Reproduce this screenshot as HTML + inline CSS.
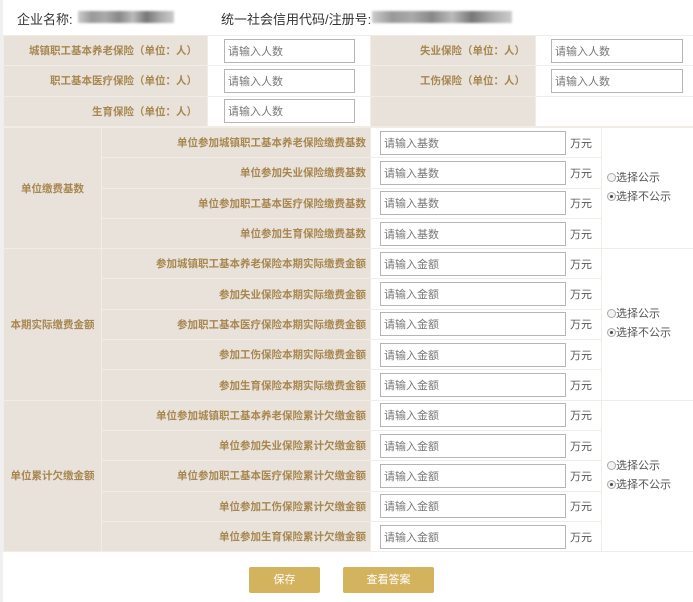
<!DOCTYPE html>
<html><head><meta charset="utf-8"><style>
*{margin:0;padding:0;box-sizing:border-box}
body{width:693px;height:602px;background:#fff;font-family:"Liberation Sans","Noto Sans CJK SC",sans-serif;position:relative;overflow:hidden}
.strip{position:absolute;left:0;top:0;width:3px;height:602px;background:#f0f0f0}
.hdr{position:absolute;top:9px;font-size:13px;color:#333}
.blur{position:absolute;top:11px;height:12px;background:linear-gradient(90deg,#ccc,#999,#aaa,#888,#bbb,#777,#aaa,#ccc);filter:blur(1px)}
table{position:absolute;border-collapse:collapse;table-layout:fixed}
td{border:1px solid #f1ece6;font-size:11px;height:30.3px;padding:0}
.l{background:#e8e2da;color:#a7864f;font-weight:bold;text-align:right;padding-right:10px;font-size:10.5px}
.t2 .l{padding-right:4px}
.c{text-align:center!important;padding:0!important}
.in{display:inline-flex;align-items:center;border:1px solid #b5b5b5;height:24px;font-size:11px;color:#777;padding-left:3px;vertical-align:middle;background:#fff}
.u{font-size:11px;color:#555;margin-left:4px;vertical-align:middle}
.r{font-size:11px;color:#555;line-height:19px;padding-left:5px}
.rb{display:inline-block;width:9px;height:9px;border:1px solid #aaa;border-radius:50%;vertical-align:-1px;position:relative;background:#f3f3f3}
.rb.on::after{content:"";position:absolute;left:2px;top:2px;width:3px;height:3px;border-radius:50%;background:#444}
.btn{position:absolute;top:567px;height:26px;background:#d4b35f;color:#fff;font-size:11px;text-align:center;line-height:26px;border-radius:2px}
</style></head><body>
<div class="strip"></div>
<div class="hdr" style="left:17px">企业名称:</div>
<div class="blur" style="left:78px;width:96px"></div>
<div class="hdr" style="left:221px">统一社会信用代码/注册号:</div>
<div class="blur" style="left:372px;width:140px"></div>

<table style="left:3px;top:35px;width:690px">
<colgroup><col style="width:204px"><col style="width:163px"><col style="width:165px"><col style="width:158px"></colgroup>
<tr><td class="l">城镇职工基本养老保险（单位：人）</td><td style="padding-left:16px"><span class="in" style="width:131px">请输入人数</span></td><td class="l">失业保险（单位：人）</td><td style="padding-left:15px"><span class="in" style="width:132px">请输入人数</span></td></tr>
<tr><td class="l">职工基本医疗保险（单位：人）</td><td style="padding-left:16px"><span class="in" style="width:131px">请输入人数</span></td><td class="l">工伤保险（单位：人）</td><td style="padding-left:15px"><span class="in" style="width:132px">请输入人数</span></td></tr>
<tr><td class="l">生育保险（单位：人）</td><td style="padding-left:16px"><span class="in" style="width:131px">请输入人数</span></td><td class="l"></td><td></td></tr>
</table>

<table class="t2" style="left:3px;top:127px;width:690px">
<colgroup><col style="width:98px"><col style="width:269px"><col style="width:231px"><col style="width:92px"></colgroup>
<tr><td class="l c" rowspan="4">单位缴费基数</td><td class="l">单位参加城镇职工基本养老保险缴费基数</td><td style="padding-left:9px"><span class="in" style="width:186px">请输入基数</span><span class="u">万元</span></td><td rowspan="4" class="r"><span class="rb"></span>选择公示<br><span class="rb on"></span>选择不公示</td></tr>
<tr><td class="l">单位参加失业保险缴费基数</td><td style="padding-left:9px"><span class="in" style="width:186px">请输入基数</span><span class="u">万元</span></td></tr>
<tr><td class="l">单位参加职工基本医疗保险缴费基数</td><td style="padding-left:9px"><span class="in" style="width:186px">请输入基数</span><span class="u">万元</span></td></tr>
<tr><td class="l">单位参加生育保险缴费基数</td><td style="padding-left:9px"><span class="in" style="width:186px">请输入基数</span><span class="u">万元</span></td></tr>
<tr><td class="l c" rowspan="5">本期实际缴费金额</td><td class="l">参加城镇职工基本养老保险本期实际缴费金额</td><td style="padding-left:9px"><span class="in" style="width:186px">请输入金额</span><span class="u">万元</span></td><td rowspan="5" class="r"><span class="rb"></span>选择公示<br><span class="rb on"></span>选择不公示</td></tr>
<tr><td class="l">参加失业保险本期实际缴费金额</td><td style="padding-left:9px"><span class="in" style="width:186px">请输入金额</span><span class="u">万元</span></td></tr>
<tr><td class="l">参加职工基本医疗保险本期实际缴费金额</td><td style="padding-left:9px"><span class="in" style="width:186px">请输入金额</span><span class="u">万元</span></td></tr>
<tr><td class="l">参加工伤保险本期实际缴费金额</td><td style="padding-left:9px"><span class="in" style="width:186px">请输入金额</span><span class="u">万元</span></td></tr>
<tr><td class="l">参加生育保险本期实际缴费金额</td><td style="padding-left:9px"><span class="in" style="width:186px">请输入金额</span><span class="u">万元</span></td></tr>
<tr><td class="l c" rowspan="5">单位累计欠缴金额</td><td class="l">单位参加城镇职工基本养老保险累计欠缴金额</td><td style="padding-left:9px"><span class="in" style="width:186px">请输入金额</span><span class="u">万元</span></td><td rowspan="5" class="r"><span class="rb"></span>选择公示<br><span class="rb on"></span>选择不公示</td></tr>
<tr><td class="l">单位参加失业保险累计欠缴金额</td><td style="padding-left:9px"><span class="in" style="width:186px">请输入金额</span><span class="u">万元</span></td></tr>
<tr><td class="l">单位参加职工基本医疗保险累计欠缴金额</td><td style="padding-left:9px"><span class="in" style="width:186px">请输入金额</span><span class="u">万元</span></td></tr>
<tr><td class="l">单位参加工伤保险累计欠缴金额</td><td style="padding-left:9px"><span class="in" style="width:186px">请输入金额</span><span class="u">万元</span></td></tr>
<tr><td class="l">单位参加生育保险累计欠缴金额</td><td style="padding-left:9px"><span class="in" style="width:186px">请输入金额</span><span class="u">万元</span></td></tr>
</table>

<div class="btn" style="left:249px;width:71px">保存</div>
<div class="btn" style="left:343px;width:91px">查看答案</div>
</body></html>
